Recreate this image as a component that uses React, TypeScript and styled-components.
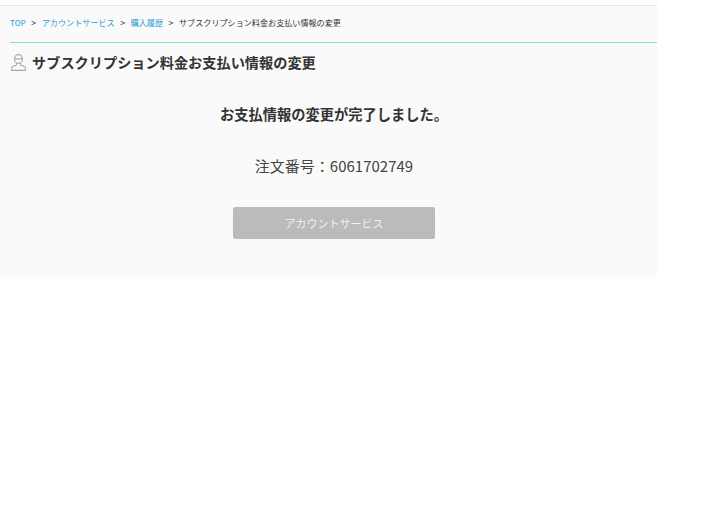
import React from "react";
import styled, { createGlobalStyle } from "styled-components";

const Global = createGlobalStyle`
  html, body { margin: 0; padding: 0; background: #fff; }
  body { font-family: "Noto Sans CJK JP", "Noto Sans", sans-serif; color: #333; }
`;

const Page = styled.div`
  width: 657px;
  margin-top: 5px;
  height: 272px;
  box-sizing: border-box;
  background: #fafafa;
  border-top: 1px solid #e6e6e6;
  padding-left: 10px;
  display: flex;
  flex-direction: column;
`;

const Breadcrumb = styled.nav`
  height: 37px;
  box-sizing: border-box;
  border-bottom: 1px solid #80e0c8;
  display: flex;
  align-items: center;
  font-size: 8.1px;
  line-height: 12px;
  padding-bottom: 3px;
`;

const Crumb = styled.a`
  color: #1f9fd6;
  text-decoration: none;
`;

const Current = styled.span`
  color: #333;
`;

const Sep = styled.span`
  color: #333;
  font-size: 9px;
  margin: 0 5.5px;
`;

const TitleRow = styled.div`
  display: flex;
  align-items: center;
  height: 38px;
  gap: 6px;
  padding-left: 1px;
`;

const Title = styled.h1`
  margin: 0;
  font-size: 14.2px;
  font-weight: 700;
  color: #333;
  line-height: 20px;
`;

const Body = styled.div`
  margin-left: -10px;
  padding-left: 11px;
  display: flex;
  flex-direction: column;
  align-items: center;
  padding-top: 23px;
`;

const Done = styled.p`
  margin: 0;
  font-size: 14.25px;
  font-weight: 700;
  line-height: 20px;
  color: #333;
`;

const OrderNo = styled.p`
  margin: 32px 0 0;
  font-size: 15px;
  line-height: 20px;
  color: #444;
`;

const Action = styled.button`
  margin-top: 31px;
  width: 202px;
  height: 32px;
  border: 0;
  border-radius: 2px;
  background: #bbbbbb;
  color: #f0f0f0;
  font: inherit;
  font-size: 11px;
  padding: 0;
`;

const PersonIcon = () => (
  <svg width="15" height="17" viewBox="0 0 15 17" fill="none" stroke="#a8a8a8" strokeWidth="1.1">
    <ellipse cx="7.5" cy="5" rx="4" ry="4.4" />
    <path d="M3.6 4.6c2.2.4 5.6.4 7.8 0" />
    <path d="M5.4 9v1.6c0 .8-.6 1.1-1.6 1.3L2 12.3c-.9.3-1.4.9-1.4 1.8v2.3h13.8v-2.3c0-.9-.5-1.5-1.4-1.8l-1.8-.4c-1-.2-1.6-.5-1.6-1.3V9" />
  </svg>
);

export default function App() {
  return (
    <>
      <Global />
      <Page>
        <Breadcrumb>
          <Crumb href="#">TOP</Crumb>
          <Sep>&gt;</Sep>
          <Crumb href="#">アカウントサービス</Crumb>
          <Sep>&gt;</Sep>
          <Crumb href="#">購入履歴</Crumb>
          <Sep>&gt;</Sep>
          <Current>サブスクリプション料金お支払い情報の変更</Current>
        </Breadcrumb>
        <TitleRow>
          <PersonIcon />
          <Title>サブスクリプション料金お支払い情報の変更</Title>
        </TitleRow>
        <Body>
          <Done>お支払情報の変更が完了しました。</Done>
          <OrderNo>注文番号：6061702749</OrderNo>
          <Action type="button">アカウントサービス</Action>
        </Body>
      </Page>
    </>
  );
}
